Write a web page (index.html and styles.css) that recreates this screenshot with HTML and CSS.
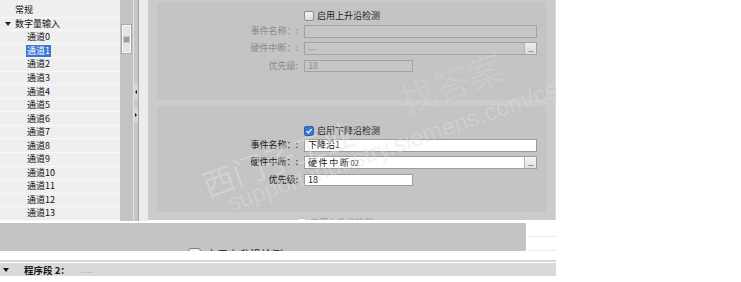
FILE: index.html
```html
<!DOCTYPE html>
<html>
<head>
<meta charset="utf-8">
<link rel="stylesheet" href="styles.css">
</head>
<body>
<div class="page">
  <div class="top">
    <div class="tree">
      <div class="row lvl0">常规</div>
      <div class="row lvl0"><span class="caret"></span>数字量输入</div>
      <div class="row lvl1">通道0</div>
      <div class="row lvl1"><span class="sel">通道1</span></div>
      <div class="row lvl1">通道2</div>
      <div class="row lvl1">通道3</div>
      <div class="row lvl1">通道4</div>
      <div class="row lvl1">通道5</div>
      <div class="row lvl1">通道6</div>
      <div class="row lvl1">通道7</div>
      <div class="row lvl1">通道8</div>
      <div class="row lvl1">通道9</div>
      <div class="row lvl1">通道10</div>
      <div class="row lvl1">通道11</div>
      <div class="row lvl1">通道12</div>
      <div class="row lvl1">通道13</div>
    </div>
    <div class="vscroll"><div class="thumb"><span class="grip"></span></div></div>
    <div class="splitter">
      <div class="sp-a"></div>
      <div class="sp-b">
        <div class="handle"><span class="arr-l"></span></div>
        <div class="handle h2"><span class="arr-r"></span></div>
      </div>
      <div class="sp-c"></div>
      <div class="sp-d"></div>
    </div>
    <div class="content">
      <div class="panel p1">
        <div class="chk-row">
          <span class="cb"></span><span class="chk-label">启用上升沿检测</span>
        </div>
        <div class="form">
          <div class="lbl">事件名称：:</div>
          <div class="field"></div>
          <div class="lbl">硬件中断：:</div>
          <div class="field"><span class="val">---</span><span class="btn">...</span></div>
          <div class="lbl">优先级:</div>
          <div class="field short"><span class="val">18</span></div>
        </div>
      </div>
      <div class="panel p2 on">
        <div class="chk-row">
          <span class="cb checked"><svg width="10" height="10" viewBox="0 0 10 10"><path d="M2 5.2 L4.2 7.4 L8.2 2.6" fill="none" stroke="#fff" stroke-width="1.6"/></svg></span><span class="chk-label">启用下降沿检测</span>
        </div>
        <div class="form">
          <div class="lbl">事件名称：:</div>
          <div class="field"><span class="val">下降沿1</span></div>
          <div class="lbl">硬件中断：:</div>
          <div class="field"><span class="val hw">硬件中断<small>02</small></span><span class="btn">...</span></div>
          <div class="lbl">优先级:</div>
          <div class="field short"><span class="val">18</span></div>
        </div>
      </div>
      <div class="peek"><span class="cb"></span><span class="peek-text">启用上升沿检测</span></div>
    </div>
  </div>
  <div class="mid">
    <div class="band"><div class="band-peek"><span class="cb big"></span><span class="band-text">启用上升沿检测</span></div></div>
    <div class="bandside"><div class="bs-row"></div><div class="bs-row"></div></div>
  </div>
  <div class="sep"></div>
  <div class="netbar">
    <span class="caret dark"></span>
    <span class="net-title">程序段 2：</span>
    <span class="net-dots">.....</span>
  </div>
  <div class="wm wm1">西门子工业</div>
  <div class="wm wm2">找答案</div>
  <div class="wm wm3">support.industry.siemens.com/cs</div>
</div>
</body>
</html>
```

FILE: styles.css
```css
* { box-sizing: border-box; margin: 0; padding: 0; }
body {
  margin: 0;
  background: #fff;
  font-family: "Noto Sans CJK SC", "Noto Sans", sans-serif;
  font-size: 9px;
  color: #1a1a1a;
  width: 741px;
  height: 282px;
  overflow: hidden;
}
.page { position: relative; width: 741px; height: 282px; }

.top { display: flex; height: 221px; width: 556px; }

/* tree */
.tree { width: 120px; background: #efefef; padding-top: 4px; }
.row {
  height: 13.55px;
  border-bottom: 1px solid #f8f8f8;
  white-space: nowrap;
  display: flex;
  align-items: center;
  line-height: 12px;
  color: #111;
}
.lvl0 { padding-left: 15px; }
.lvl1 { padding-left: 27px; }
.caret {
  width: 0; height: 0;
  border-left: 3px solid transparent;
  border-right: 3px solid transparent;
  border-top: 4px solid #222;
  margin-left: -10px;
  margin-right: 4px;
}
.sel { background: #3a74d2; color: #fff; padding: 0 1px; margin-left: -1px; line-height: 12px; }

/* scrollbar */
.vscroll { width: 13px; background: #c3c3c3; padding: 24px 0 0 1px; }
.thumb {
  width: 11px; height: 30px;
  background: #e4e4e4;
  border: 1px solid #a8a8a8;
  box-shadow: inset 0 0 0 1px #f7f7f7;
  display: flex; align-items: center; justify-content: center;
}
.grip { width: 7px; height: 7px; background: #9c9c9c; border: 1px solid #c6c6c6; }

/* splitter */
.splitter { width: 15px; display: flex; }
.sp-a { width: 1px; background: #e2e2e2; }
.sp-b { width: 4px; background: #c6c6c6; padding-top: 83px; display: flex; flex-direction: column; gap: 7px; }
.sp-c { width: 1px; background: #a6a6a6; }
.sp-d { width: 9px; background: #ececec; }
.handle { height: 17px; background: #d6d6d6; display: flex; align-items: center; justify-content: center; }
.handle.h2 { height: 15px; }
.arr-l { width: 0; height: 0; border-top: 2px solid transparent; border-bottom: 2px solid transparent; border-right: 2px solid #111; }
.arr-r { width: 0; height: 0; border-top: 2px solid transparent; border-bottom: 2px solid transparent; border-left: 2px solid #111; }

/* content */
.content {
  width: 408px; height: 220px;
  background: #cbcbcb;
  padding: 2px 9px 0;
  overflow: hidden;
  border-right: 1px solid #d8d8d8;
}
.panel { background: #c4c4c4; }
.p1 { height: 98px; padding-top: 9px; }
.p2 { height: 106px; margin-top: 6px; padding-top: 20px; }

.chk-row { display: flex; align-items: center; height: 10px; padding-left: 147px; gap: 3px; }
.chk-label { color: #1e1e1e; line-height: 10px; white-space: nowrap; }

.cb {
  width: 10px; height: 10px; flex: none;
  border: 1px solid #8e8e8e;
  border-radius: 2px;
  background: linear-gradient(#f6f6f6, #dcdcdc);
  display: flex; align-items: center; justify-content: center;
}
.cb.checked { background: #3b78d8; border-color: #2d5ea9; }
.cb svg { display: block; }

.form {
  display: grid;
  grid-template-columns: 141px 233px;
  column-gap: 6px;
  row-gap: 4.8px;
  grid-auto-rows: 12.5px;
  margin-top: 4px;
}
.p2 .form { margin-top: 3px; }
.lbl { text-align: right; line-height: 12.5px; color: #8a8a8a; white-space: nowrap; }
.on .lbl { color: #1a1a1a; }

.field {
  border: 1px solid #a3a3a3;
  background: #c6c6c6;
  display: flex; align-items: center;
  padding-left: 3px;
  color: #8e8e8e;
  line-height: 10px;
  white-space: nowrap;
}
.field.short { width: 109px; }
.on .field { background: #fff; border-color: #9c9c9c; color: #111; }
.val { font-family: "Noto Sans CJK SC", "Noto Sans", sans-serif; }
.hw { letter-spacing: 1.6px; }
.hw small { font-size: 7.5px; letter-spacing: 0.3px; }
.btn {
  margin-left: auto;
  width: 12px; height: 100%;
  background: linear-gradient(#f4f4f4, #e2e2e2);
  border-left: 1px solid #b4b4b4;
  color: #333;
  font-size: 8px;
  line-height: 12px;
  text-align: center;
  letter-spacing: -0.5px;
}
.p1 .btn { background: linear-gradient(#ececec, #dcdcdc); color: #555; }

.peek { display: flex; gap: 3px; margin-top: 6px; padding-left: 140px; }
.peek .cb { background: #fafafa; border-color: #bdbdbd; }
.peek-text { color: #999; line-height: 10px; }

/* middle band */
.mid { display: flex; margin-top: 2px; height: 28px; width: 556px; }
.band { width: 526px; background: #c4c4c4; overflow: hidden; padding: 25px 0 0 188px; }
.band-peek { display: flex; gap: 5px; align-items: flex-start; }
.cb.big { width: 13px; height: 12px; border-color: #7e7e7e; border-radius: 3px; }
.band-text { font-size: 11px; line-height: 12px; color: #222; }
.bandside { flex: 1; margin-left: 2px; display: flex; flex-direction: column; }
.bs-row { height: 14px; border-bottom: 1px solid #ebebeb; }

.sep { margin-top: 9px; height: 2px; width: 556px; background: #d6d6d6; }
.netbar {
  margin-top: 1px; height: 13px; width: 556px;
  background: #d9d9d9;
  display: flex; align-items: center;
  padding-left: 3px;
}
.caret.dark { margin-left: 0; margin-right: 0; border-top-color: #111; }
.net-title { margin-left: 15px; font-weight: bold; font-size: 9.5px; line-height: 12px; color: #111; }
.net-dots { margin-left: 11px; color: #aaa; font-size: 8px; line-height: 12px; }

/* watermark */
.wm {
  position: absolute;
  color: rgba(255, 255, 255, 0.4);
  text-shadow: 0 0 1px rgba(0, 0, 0, 0.08);
  white-space: nowrap;
  transform-origin: 0 50%;
  pointer-events: none;
}
.wm1 { left: 203px; top: 168px; font-size: 32px; line-height: 34px; transform: rotate(-20deg); }
.wm2 { left: 400px; top: 80px; font-size: 36px; line-height: 40px; transform: rotate(-20deg); color: rgba(255, 255, 255, 0.3); }
.wm3 {
  left: 228px; top: 191px;
  font-family: "Liberation Sans", Arial, sans-serif;
  font-size: 24px; line-height: 26px;
  transform: rotate(-19.3deg);
  color: rgba(255, 255, 255, 0.36);
}
```
